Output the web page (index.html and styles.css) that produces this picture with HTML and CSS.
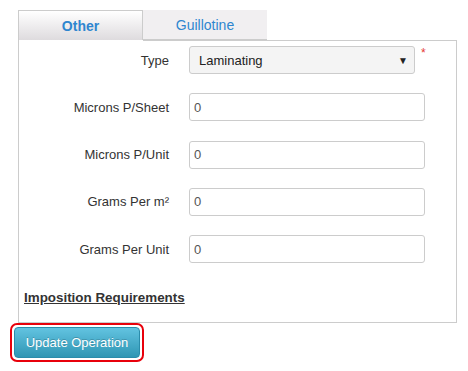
FILE: index.html
```html
<!DOCTYPE html>
<html lang="en">
<head>
  <meta charset="UTF-8">
  <title>Operation</title>
  <link rel="stylesheet" href="styles.css">
</head>
<body>
  <div class="tabs">
    <div class="tab active">Other</div>
    <div class="tab">Guillotine</div>
  </div>

  <div class="panel">
    <div class="row">
      <label>Type</label>
      <div class="select-wrap">
        <div class="select">
          <span>Laminating</span>
          <span class="arrow">&#9660;</span>
        </div>
        <span class="required">*</span>
      </div>
    </div>
    <div class="row">
      <label>Microns P/Sheet</label>
      <input type="text" value="0">
    </div>
    <div class="row">
      <label>Microns P/Unit</label>
      <input type="text" value="0">
    </div>
    <div class="row">
      <label>Grams Per m²</label>
      <input type="text" value="0">
    </div>
    <div class="row">
      <label>Grams Per Unit</label>
      <input type="text" value="0">
    </div>

    <a class="section-link" href="#">Imposition Requirements</a>
  </div>

  <div class="actions">
    <span class="highlight">
      <button class="btn-update">Update Operation</button>
    </span>
  </div>
</body>
</html>
```

FILE: styles.css
```css
/* General */
body {
  margin: 0;
  padding: 10px 12px 0 18px;
  font-family: Arial, "Liberation Sans", sans-serif;
  font-size: 13px;
  color: #333333;
  background-color: #ffffff;
}

/* Tabs */
.tabs {
  display: flex;
  height: 30px;
}

.tab {
  width: 124px;
  display: flex;
  justify-content: center;
  align-items: center;
  font-size: 14px;
  color: #2e86cf;
  background-color: #f1eff1;
  border-bottom: 1px solid #cccccc;
  box-sizing: border-box;
}

.tab.active {
  width: 125px;
  font-weight: bold;
  background: linear-gradient(#ffffff, #dedbde);
  border: 1px solid #cccccc;
  border-bottom: none;
}

/* Panel */
.panel {
  width: 439px;
  height: 283px;
  box-sizing: border-box;
  border: 1px solid #cccccc;
  border-top: none;
  padding: 6px 0 0 0;
  position: relative;
}

.panel::before {
  content: "";
  position: absolute;
  top: 0;
  left: 124px;
  right: -1px;
  border-top: 1px solid #cccccc;
}

.row {
  display: grid;
  grid-template-columns: 150px 1fr;
  column-gap: 20px;
  align-items: center;
  height: 28px;
  margin-bottom: 19.25px;
}

.row label {
  text-align: right;
  color: #333333;
}

.select-wrap {
  display: flex;
  align-items: flex-start;
}

.select {
  width: 226px;
  height: 28px;
  box-sizing: border-box;
  border: 1px solid #cccccc;
  border-radius: 3px;
  background-color: #f4f4f4;
  display: flex;
  justify-content: space-between;
  align-items: center;
  padding: 0 6px 0 9px;
  color: #222222;
}

.arrow {
  font-size: 10px;
  color: #222222;
}

.required {
  color: #e53935;
  font-size: 12px;
  margin-left: 6px;
  line-height: 14px;
}

input {
  width: 236px;
  height: 28px;
  box-sizing: border-box;
  border: 1px solid #cccccc;
  border-radius: 3px;
  padding: 0 4px;
  font-family: Arial, "Liberation Sans", sans-serif;
  font-size: 13px;
  color: #555555;
  background-color: #ffffff;
}

.section-link {
  display: inline-block;
  margin: 8px 0 0 5px;
  font-size: 13.4px;
  font-weight: bold;
  color: #333333;
  text-decoration: underline;
}

/* Botón */
.actions {
  margin: 0 0 0 -8px;
}

.highlight {
  display: inline-block;
  border: 2px solid #e8000b;
  border-radius: 7px;
  padding: 2px;
}

.btn-update {
  display: block;
  width: 126px;
  height: 31px;
  border: 1px solid #2a8cab;
  border-radius: 4px;
  background: linear-gradient(#62c3e0, #2f96b4);
  color: #ffffff;
  font-family: Arial, "Liberation Sans", sans-serif;
  font-size: 13px;
  padding: 0;
  text-shadow: 0 -1px 0 rgba(0, 0, 0, 0.2);
}
```
